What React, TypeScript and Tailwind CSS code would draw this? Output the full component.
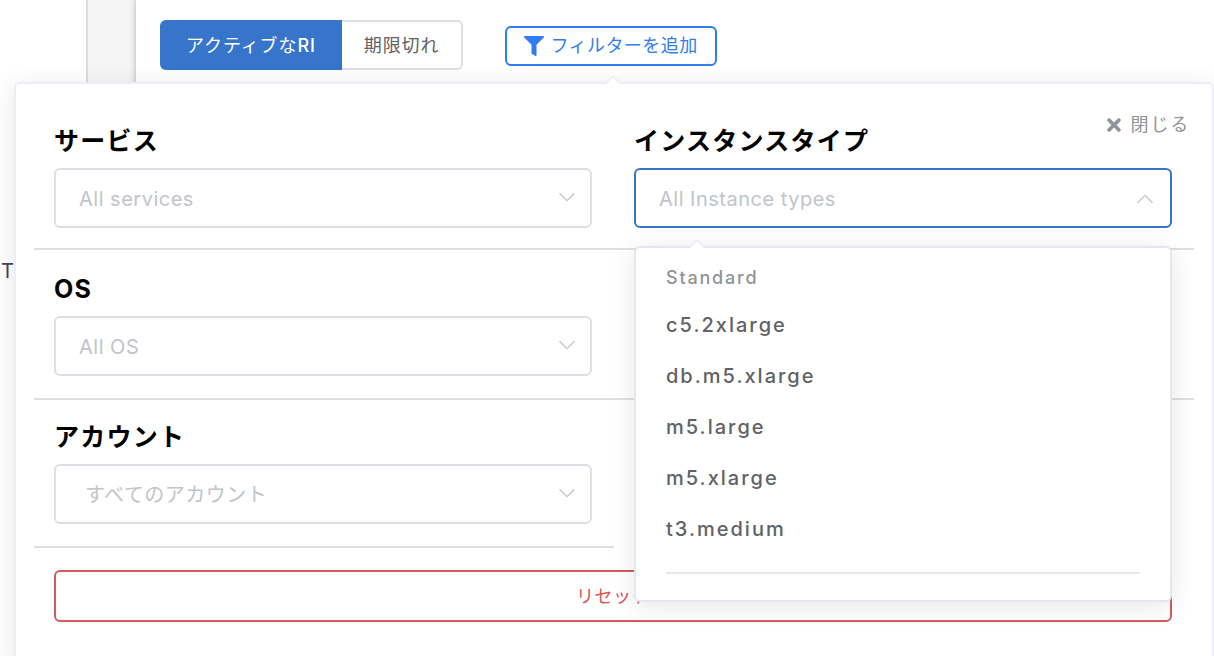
import type { ReactNode } from 'react';
import { FaFilter, FaTimes } from 'react-icons/fa';

type SelectFieldProps = {
  id: string;
  label: string;
  placeholder: string;
  options?: string[];
  open?: boolean;
  inset?: string;
  className?: string;
  children?: ReactNode;
};

const instanceTypes = ['c5.2xlarge', 'db.m5.xlarge', 'm5.large', 'm5.xlarge', 't3.medium'];

function Chevron({ up = false }: { up?: boolean }) {
  return (
    <svg
      className={`pointer-events-none absolute top-[20px] h-5 w-5 text-[#c0c4cc] ${up ? 'right-[17px]' : 'right-[15px]'}`}
      viewBox="0 0 20 20"
      fill="none"
      stroke="currentColor"
      strokeWidth="1.3"
      aria-hidden="true"
    >
      <path d={up ? 'M2.5 14.8 10 7.3l7.5 7.5' : 'M2.500 5.200 10 12.700l7.500-7.500'} />
    </svg>
  );
}

function Caret({ className }: { className: string }) {
  return (
    <svg className={`absolute h-2 w-4 ${className}`} viewBox="0 0 16 8" aria-hidden="true">
      <path d="M0 8 1.5 7.5 7 2Q8 1 9 2L14.5 7.5 16 8Z" fill="#fff" />
      <path d="M1 7 6.8 1.2Q8 0 9.200 1.200L15 7" fill="none" stroke="#ebeef5" strokeWidth="1.5" />
    </svg>
  );
}

function SelectField({
  id,
  label,
  placeholder,
  options = [],
  open = false,
  inset = 'pl-[23px]',
  className = 'pb-[22px]',
  children,
}: SelectFieldProps) {
  return (
    <div className={`border-b-2 border-[#dfdfdf] pr-[22px] pl-5 ${className}`}>
      <label htmlFor={id} className="block text-[25px] leading-[38px] font-bold tracking-wider text-black">
        {label}
      </label>
      <div className="relative mt-2">
        <select
          id={id}
          defaultValue=""
          className={`block h-[60px] w-full appearance-none rounded-md border-2 bg-white pt-[2px] pr-12 text-xl tracking-wide text-[#c0c4cc] outline-none ${inset} ${open ? 'border-[#3775cb]' : 'border-[#dcdfe6]'}`}
        >
          <option value="">{placeholder}</option>
          {options.map((option) => (
            <option key={option}>{option}</option>
          ))}
        </select>
        <Chevron up={open} />
        {children}
      </div>
    </div>
  );
}

function InstanceTypeMenu() {
  return (
    <div className="absolute top-full right-0 left-0 z-20 mt-[18px] rounded-md border-2 border-[#e4e7ed] bg-white px-[30px] pt-[14px] pb-[26px] shadow-[0_4px_24px_rgba(0,0,0,0.1)]">
      <Caret className="-top-2 left-[53px]" />
      <p className="text-lg leading-8 font-medium tracking-widest text-[#909399]">Standard</p>
      <ul role="listbox" aria-label="Standard" className="border-b-2 border-[#e4e7ed] pt-[6px] pb-[17px]">
        {instanceTypes.map((type) => (
          <li
            key={type}
            role="option"
            aria-selected="false"
            className="h-[51px] cursor-pointer text-xl leading-[51px] font-medium tracking-widest text-[#606266]"
          >
            {type}
          </li>
        ))}
      </ul>
    </div>
  );
}

function FilterPanel() {
  return (
    <section
      aria-label="フィルター"
      className="absolute top-[82px] right-0 -bottom-4 left-[14px] z-10 rounded-md border-2 border-[#ebeef5] bg-white px-[18px] pt-[38px] shadow-[0_4px_24px_rgba(0,0,0,0.1)]"
    >
      <Caret className="-top-2 left-[589px]" />
      <button
        type="button"
        className="absolute top-[25px] right-[22px] flex items-center gap-[9px] text-lg leading-8 tracking-widest text-[#909399]"
      >
        <FaTimes className="h-5 w-[16px]" aria-hidden="true" />
        閉じる
      </button>

      <div className="grid grid-cols-2">
        <SelectField id="service" label="サービス" placeholder="All services" className="pb-5" />
        <SelectField
          id="instance-type"
          label="インスタンスタイプ"
          placeholder="All Instance types"
          options={instanceTypes}
          open
          className="pb-5"
        >
          <InstanceTypeMenu />
        </SelectField>
        <SelectField id="os" label="OS" placeholder="All OS" className="pt-5 pb-[22px]" />
        <div className="border-b-2 border-[#dfdfdf]" />
        <SelectField
          id="account"
          label="アカウント"
          placeholder="すべてのアカウント"
          inset="pl-[29px]"
          className="pt-[18px] pb-[22px]"
        />
      </div>

      <div className="mt-[22px] pr-[22px] pl-5">
        <button
          type="button"
          className="h-[52px] w-full rounded-md border-2 border-[#d35b5b] pt-[2px] text-lg tracking-wide text-[#d9534f]"
        >
          リセット
        </button>
      </div>
    </section>
  );
}

export default function App() {
  return (
    <div className="relative flex h-screen overflow-hidden bg-[#f5f5f5] font-['Inter','Noto_Sans_CJK_JP',sans-serif]">
      <aside className="w-[88px] shrink-0 border-r-2 border-[#dcdcdc] bg-white pt-[255px] pl-[1px]">
        <span className="text-xl leading-8 text-[#3d4653]">T</span>
      </aside>
      <main className="ml-12 flex-1 bg-white pt-5 pl-6 shadow-[0_0_6px_rgba(0,0,0,0.3)]">
        <div className="flex items-end">
          <div className="flex">
            <button
              type="button"
              aria-pressed="true"
              className="h-[50px] rounded-l-md bg-[#3775cb] px-[26px] pt-[2px] text-lg tracking-wider text-white"
            >
              アクティブな<span className="font-medium">RI</span>
            </button>
            <button
              type="button"
              aria-pressed="false"
              className="h-[50px] rounded-r-md border-2 border-l-0 border-[#dcdfe6] bg-white px-[22px] pt-[2px] text-lg tracking-wider text-[#606266]"
            >
              期限切れ
            </button>
          </div>
          <button
            type="button"
            aria-expanded="true"
            className="mb-1 ml-[42px] flex h-10 items-center gap-[6px] rounded-md border-2 border-[#2f7df0] bg-white px-[17px] text-lg tracking-wide text-[#2f7df0]"
          >
            <FaFilter className="h-5 w-5" aria-hidden="true" />
            フィルターを追加
          </button>
        </div>
      </main>
      <FilterPanel />
    </div>
  );
}
